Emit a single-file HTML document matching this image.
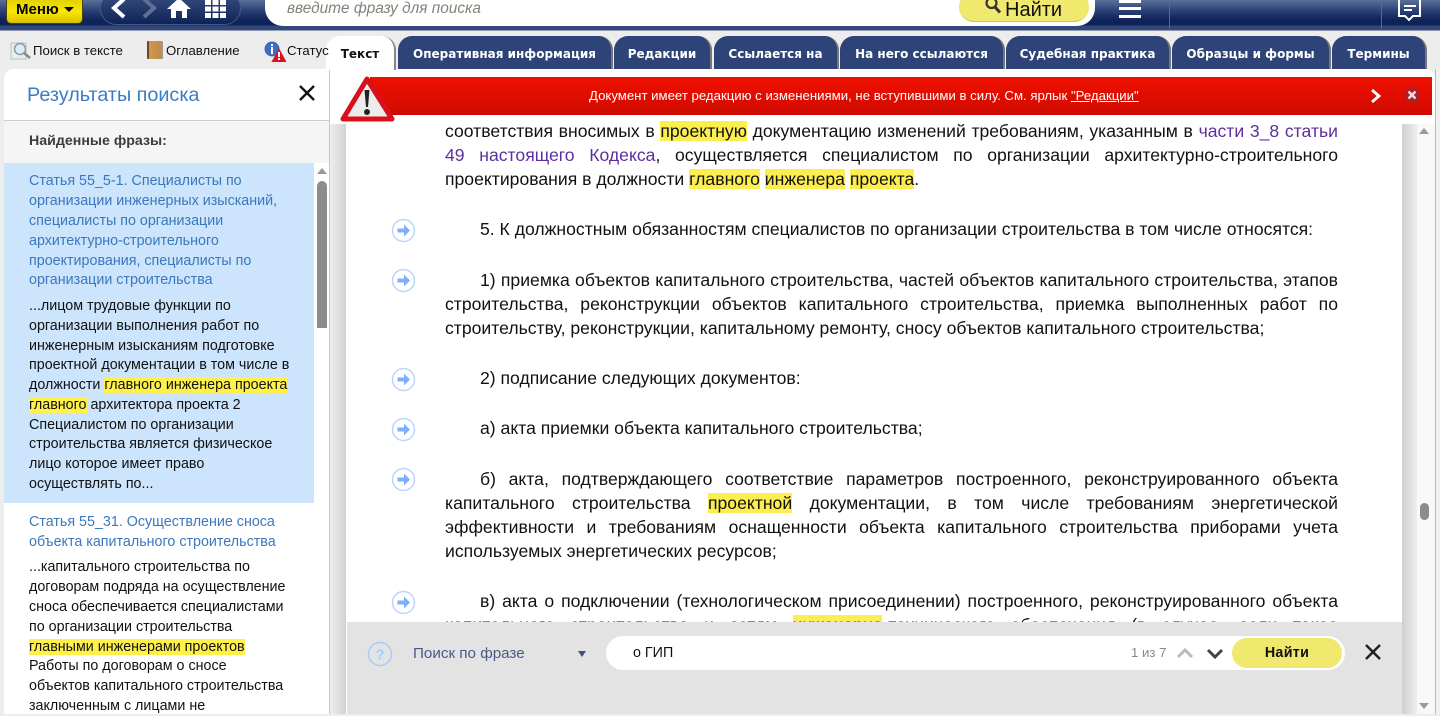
<!DOCTYPE html>
<html lang="ru"><head><meta charset="utf-8"><title>Документ</title>
<style>
html,body{margin:0;padding:0;width:1440px;height:714px;overflow:hidden;background:#ededed;font-family:"Liberation Sans",sans-serif;color:#000}
.a{position:absolute}
.tab{position:absolute;top:36px;height:33px;background:#2e4479;border-radius:14px 14px 0 0;border-right:2px solid #777;box-sizing:border-box;color:#fff;font:bold 12px/36px "DejaVu Sans",sans-serif;text-align:center;white-space:nowrap}
.l{position:absolute;left:445px;width:893px;font-size:17.6px;line-height:24px;height:24px;white-space:nowrap;text-align:justify;text-align-last:justify;color:#111}
.n{text-align-last:left}
.l b,.s b{font-weight:normal;background:#fdee4f}
.s{position:absolute;left:29px;margin-top:1px;font-size:14.3px;line-height:20px;height:20px;white-space:nowrap;color:#111}
.t{color:#3b78bd}
.p{color:#5d2f9c}
.s b{background:#fff14a}
.ic{position:absolute;left:391px}
</style></head><body>

<!-- top bar -->
<div class="a" style="left:0;top:0;width:1440px;height:31px;background:linear-gradient(#5a7099 0,#2d4478 10px,#0e2357 20px,#0e2357 25px,#33487a 26px,#33487a 30px,#ededed 31px)"></div>
<div class="a" style="left:6px;top:-6px;width:77px;height:30px;box-sizing:border-box;border:1px solid #4a4210;border-radius:5px;background:linear-gradient(#dcc800,#f7e800 60%,#d8c000);font:bold 15px/29px 'Liberation Sans',sans-serif;padding-left:9px">Меню<span style="display:inline-block;margin-left:5px;vertical-align:2px;border:5px solid transparent;border-top-color:#000;border-bottom:0"></span></div>
<div class="a" style="left:100px;top:-8px;width:141px;height:33px;box-sizing:border-box;border:1px solid #44598a;border-radius:17px;background:linear-gradient(#3a5080,#0e2357)"></div>
<svg class="a" style="left:100px;top:0" width="141" height="25">
<path d="M24 -1 L14 8 L24 17" fill="none" stroke="#fff" stroke-width="4"/>
<path d="M44 -1 L54 8 L44 17" fill="none" stroke="#5d6f94" stroke-width="4"/>
<path d="M67 9 L79 -2 L91 9 H87 V18 H82 V11 H76 V18 H71 V9 Z" fill="#fff"/>
<g fill="#fff"><rect x="105" y="0" width="6" height="5"/><rect x="112.500" y="0" width="6" height="5"/><rect x="120" y="0" width="6" height="5"/><rect x="105" y="6.500" width="6" height="5"/><rect x="112.500" y="6.500" width="6" height="5"/><rect x="120" y="6.500" width="6" height="5"/><rect x="105" y="13" width="6" height="5"/><rect x="112.500" y="13" width="6" height="5"/><rect x="120" y="13" width="6" height="5"/></g>
</svg>
<div class="a" style="left:265px;top:-10px;width:830px;height:36px;background:#fff;border-radius:0 0 18px 18px"></div>
<div class="a" style="left:287px;top:0;font:italic 15.400px/17px 'Liberation Sans',sans-serif;color:#85827a;white-space:nowrap">введите фразу для поиска</div>
<div class="a" style="left:959px;top:-8px;width:130px;height:30px;border-radius:15px;background:#f0e96e;border-bottom:1px solid #cfc65a;box-sizing:border-box"></div>
<div class="a" style="left:1005px;top:-2px;font-size:20px;line-height:24px;color:#111;white-space:nowrap">Найти</div>
<svg class="a" style="left:983px;top:0" width="20" height="16"><circle cx="8.500" cy="3" r="5" fill="none" stroke="#333" stroke-width="2.200"/><path d="M12 7 L17 12.500" stroke="#333" stroke-width="3"/></svg>
<div class="a" style="left:1119px;top:0;width:22px;height:3px;background:#fff"></div>
<div class="a" style="left:1119px;top:7px;width:22px;height:3px;background:#fff"></div>
<div class="a" style="left:1119px;top:15px;width:22px;height:3px;background:#fff"></div>
<div class="a" style="left:1169px;top:0;width:1px;height:29px;background:#56698f"></div>
<div class="a" style="left:1381px;top:0;width:1px;height:29px;background:#56698f"></div>
<svg class="a" style="left:1396px;top:0" width="28" height="24"><path d="M3 -2 V16 H9 L13 20 L17 16 H24 V-2" fill="none" stroke="#fff" stroke-width="2"/><path d="M8 6 H20 M8 10 H16" stroke="#fff" stroke-width="2"/></svg>

<!-- toolbar -->
<svg class="a" style="left:10px;top:41px" width="22" height="19"><rect x="1" y="2" width="15" height="16" fill="#e8eee8" stroke="#b8c4b8"/><circle cx="10" cy="8" r="5.500" fill="#dcebf5" stroke="#8a9aa5" stroke-width="1.500"/><path d="M14 12 L20 17" stroke="#8a8a80" stroke-width="2.500"/></svg>
<div class="a" style="left:33px;top:42px;font-size:13.200px;line-height:17px;white-space:nowrap;color:#111">Поиск в тексте</div>
<div class="a" style="left:147px;top:41px;width:14px;height:18px;background:linear-gradient(90deg,#6b4a22 0,#6b4a22 2px,#cf9a55 2px,#c08a48);border-right:2px solid #999;box-sizing:content-box;border-radius:1px"></div>
<div class="a" style="left:166px;top:42px;font-size:13.200px;line-height:17px;white-space:nowrap;color:#111">Оглавление</div>
<svg class="a" style="left:263px;top:41px" width="25" height="22"><circle cx="9" cy="8" r="7.500" fill="#3f6cc0"/><rect x="8" y="3" width="2" height="2" fill="#fff"/><rect x="8" y="6" width="2" height="7" fill="#fff"/><path d="M16 7 L23.500 21 H8.500 Z" fill="#e01020"/><rect x="15" y="11" width="2" height="5" fill="#fff"/><rect x="15" y="17" width="2" height="2" fill="#fff"/></svg>

<!-- left panel -->
<div class="a" style="left:4px;top:69px;width:326px;height:645px;background:#fff;border-radius:10px 0 0 0;overflow:hidden">
<div class="a" style="left:0;top:51px;width:326px;height:43px;background:#f5f5f5;border-top:1px solid #ccc;box-sizing:border-box"></div>
<div class="a" style="left:0;top:94px;width:310px;height:340px;background:#cce4fc"></div>
</div>
<div class="a" style="left:27px;top:83px;font-size:19.800px;line-height:25px;color:#3a7cc4;white-space:nowrap">Результаты поиска</div>
<svg class="a" style="left:298px;top:84px" width="18" height="18"><path d="M2 2 L16 16 M16 2 L2 16" stroke="#111" stroke-width="2.400"/></svg>
<div class="a" style="left:29px;top:132px;font:bold 14.200px/18px 'Liberation Sans',sans-serif;color:#3c3c3c;white-space:nowrap">Найденные фразы:</div>
<div class="s t" style="top:170px">Статья 55_5-1. Специалисты по</div>
<div class="s t" style="top:190px">организации инженерных изысканий,</div>
<div class="s t" style="top:210px">специалисты по организации</div>
<div class="s t" style="top:230px">архитектурно-строительного</div>
<div class="s t" style="top:250px">проектирования, специалисты по</div>
<div class="s t" style="top:269px">организации строительства</div>
<div class="s" style="top:295px">...лицом трудовые функции по</div>
<div class="s" style="top:315px">организации выполнения работ по</div>
<div class="s" style="top:335px">инженерным изысканиям подготовке</div>
<div class="s" style="top:354px">проектной документации в том числе в</div>
<div class="s" style="top:374px">должности <b>главного инженера проекта</b></div>
<div class="s" style="top:394px"><b>главного</b> архитектора проекта 2</div>
<div class="s" style="top:414px">Специалистом по организации</div>
<div class="s" style="top:433px">строительства является физическое</div>
<div class="s" style="top:453px">лицо которое имеет право</div>
<div class="s" style="top:473px">осуществлять по...</div>
<div class="s t" style="top:511px">Статья 55_31. Осуществление сноса</div>
<div class="s t" style="top:531px">объекта капитального строительства</div>
<div class="s" style="top:556px">...капитального строительства по</div>
<div class="s" style="top:576px">договорам подряда на осуществление</div>
<div class="s" style="top:596px">сноса обеспечивается специалистами</div>
<div class="s" style="top:616px">по организации строительства</div>
<div class="s" style="top:636px"><b>главными инженерами проектов</b></div>
<div class="s" style="top:655px">Работы по договорам о сносе</div>
<div class="s" style="top:675px">объектов капитального строительства</div>
<div class="s" style="top:695px">заключенным с лицами не</div>
<div class="a" style="left:317px;top:181px;width:10px;height:147px;background:#8c8c8c;border-radius:5px 5px 0 0"></div>
<div class="a" style="left:317px;top:168px;border:5px solid transparent;border-bottom:6px solid #999;border-top:0"></div>

<!-- doc frame -->
<div class="a" style="left:1435px;top:69px;width:5px;height:645px;background:#f0f0f0;border-left:1px solid #bbb;box-sizing:border-box"></div>
<div class="a" style="left:329px;top:69px;width:1px;height:645px;background:#c8c8c8"></div>
<div class="a" style="left:330px;top:69px;width:1105px;height:645px;background:#fff;border-radius:0 10px 0 0"></div>
<div class="a" style="left:330px;top:124px;width:16px;height:590px;background:linear-gradient(90deg,#eeeeee,#d2d2d2)"></div>
<div class="a" style="left:1402px;top:124px;width:15px;height:590px;background:linear-gradient(90deg,#cfcfcf,#eeeeee)"></div>
<div class="a" style="left:1417px;top:124px;width:18px;height:590px;background:#f8f8f8"></div>
<div class="a" style="left:1419px;top:128px;border:5px solid transparent;border-bottom:6px solid #999;border-top:0"></div>
<div class="a" style="left:1419px;top:703px;border:5px solid transparent;border-top:6px solid #999;border-bottom:0"></div>
<div class="a" style="left:1420px;top:503px;width:9px;height:17px;background:#8c8c8c;border-radius:5px"></div>

<!-- tabs -->
<div class="a" style="left:326px;top:36px;width:70px;height:34px;background:#fff;border-radius:14px 14px 0 0;font:bold 12px/36px 'DejaVu Sans',sans-serif;text-align:center;border-right:2px solid #888;box-sizing:border-box;color:#111">Текст</div>
<div class="tab" style="left:398px;width:215px">Оперативная информация</div>
<div class="tab" style="left:614px;width:98px">Редакции</div>
<div class="tab" style="left:714px;width:125px">Ссылается на</div>
<div class="tab" style="left:840px;width:165px">На него ссылаются</div>
<div class="tab" style="left:1006px;width:165px">Судебная практика</div>
<div class="tab" style="left:1172px;width:159px">Образцы и формы</div>
<div class="tab" style="left:1332px;width:95px">Термины</div>
<div class="a" style="left:287px;top:42px;font-size:13.200px;line-height:17px;white-space:nowrap;color:#111">Статус</div>

<!-- doc text -->
<div class="l" style="top:119px">соответствия вносимых в <b>проектную</b> документацию изменений требованиям, указанным в <span class="p">части 3_8 статьи</span></div>
<div class="l" style="top:143px"><span class="p">49 настоящего Кодекса</span>, осуществляется специалистом по организации архитектурно-строительного</div>
<div class="l n" style="top:167px">проектирования в должности <b>главного</b> <b>инженера</b> <b>проекта</b>.</div>
<div class="l n" style="top:217px;left:480px;width:858px">5. К должностным обязанностям специалистов по организации строительства в том числе относятся:</div>
<div class="l" style="top:268px;left:480px;width:858px">1) приемка объектов капитального строительства, частей объектов капитального строительства, этапов</div>
<div class="l" style="top:292px">строительства, реконструкции объектов капитального строительства, приемка выполненных работ по</div>
<div class="l n" style="top:316px">строительству, реконструкции, капитальному ремонту, сносу объектов капитального строительства;</div>
<div class="l n" style="top:366px;left:480px;width:858px">2) подписание следующих документов:</div>
<div class="l n" style="top:416px;left:480px;width:858px">а) акта приемки объекта капитального строительства;</div>
<div class="l" style="top:467px;left:480px;width:858px">б) акта, подтверждающего соответствие параметров построенного, реконструированного объекта</div>
<div class="l" style="top:491px">капитального строительства <b>проектной</b> документации, в том числе требованиям энергетической</div>
<div class="l" style="top:515px">эффективности и требованиям оснащенности объекта капитального строительства приборами учета</div>
<div class="l n" style="top:539px">используемых энергетических ресурсов;</div>
<div class="l" style="top:589px;left:480px;width:858px">в) акта о подключении (технологическом присоединении) построенного, реконструированного объекта</div>
<div class="l" style="top:613px">капитального строительства и сетям <b>инженерно</b>-технического обеспечения (в случае, если такое</div>

<!-- margin icons -->
<svg class="ic" style="top:218px" width="25" height="25"><use href="#i"/></svg>
<svg class="ic" style="top:268px" width="25" height="25"><use href="#i"/></svg>
<svg class="ic" style="top:367px" width="25" height="25"><use href="#i"/></svg>
<svg class="ic" style="top:417px" width="25" height="25"><use href="#i"/></svg>
<svg class="ic" style="top:467px" width="25" height="25"><use href="#i"/></svg>
<svg class="ic" style="top:590px" width="25" height="25"><use href="#i"/></svg>
<svg width="0" height="0" style="position:absolute"><defs><g id="i"><circle cx="12.500" cy="12.500" r="11" fill="#fff" stroke="#bcd6fb" stroke-width="1.500"/><path d="M6.500 10.500 H13 V6.500 L19 12.500 L13 18.500 V14.500 H6.500 Z" fill="#7fb0fa"/></g></defs></svg>

<!-- red notice -->
<div class="a" style="left:370px;top:77px;width:1062px;height:38px;background:linear-gradient(#f01000,#d00a00)"></div>
<div class="a" style="left:370px;top:88px;width:1000px;padding-left:219px;box-sizing:border-box;font-size:13.200px;line-height:16px;color:#fff;white-space:nowrap">Документ имеет редакцию с изменениями, не вступившими в силу. См. ярлык <u>"Редакции"</u></div>
<svg class="a" style="left:340px;top:75px" width="56" height="50"><path d="M27 4 L52 44 H3 Z" fill="#ececec" stroke="#d8101c" stroke-width="5" stroke-linejoin="round"/><path d="M24.500 15 H29.500 L28 32 H26 Z" fill="#222"/><circle cx="27" cy="37" r="3" fill="#222"/></svg>
<svg class="a" style="left:1369px;top:88px" width="14" height="16"><path d="M3 2 L10 8 L3 14" fill="none" stroke="#fff" stroke-width="2.800"/></svg>
<svg class="a" style="left:1404px;top:87px" width="16" height="16"><circle cx="8" cy="8" r="7.500" fill="#a8202c"/><path d="M4.500 4.500 L11.500 11.500 M11.500 4.500 L4.500 11.500" stroke="#f2dcdc" stroke-width="2.600"/></svg>

<!-- find bar -->
<div class="a" style="left:347px;top:622px;width:1055px;height:92px;background:#e3e3e3"></div>
<svg class="a" style="left:367px;top:641px" width="26" height="26"><circle cx="13" cy="13" r="11.500" fill="none" stroke="#a6cdf7" stroke-width="1.500"/><text x="13" y="18.500" text-anchor="middle" font-family="Liberation Sans" font-weight="bold" font-size="15" fill="#a6cdf7">?</text></svg>
<div class="a" style="left:413px;top:645px;font-size:15.200px;line-height:18px;color:#4a5a85;white-space:nowrap">Поиск по фразе</div>
<div class="a" style="left:578px;top:651px;border:4.500px solid transparent;border-top:6px solid #3f5082;border-bottom:0"></div>
<div class="a" style="left:606px;top:636px;width:739px;height:34px;background:#fff;border-radius:17px"></div>
<div class="a" style="left:633px;top:644px;font-size:14.300px;line-height:18px;color:#111;white-space:nowrap">о ГИП</div>
<div class="a" style="left:1131px;top:644px;font-size:13.200px;line-height:17px;color:#888;white-space:nowrap">1 из 7</div>
<svg class="a" style="left:1176px;top:646px" width="50" height="14"><path d="M2 11 L9 4 L16 11" fill="none" stroke="#bbb" stroke-width="3"/><path d="M32 4 L39 11 L46 4" fill="none" stroke="#444" stroke-width="3"/></svg>
<div class="a" style="left:1232px;top:638px;width:110px;height:30px;background:#f0e96e;border-radius:15px;text-align:center;font:bold 14.300px/30px 'Liberation Sans',sans-serif;color:#111;letter-spacing:.3px">Найти</div>
<svg class="a" style="left:1364px;top:643px" width="18" height="18"><path d="M2 2 L16 16 M16 2 L2 16" stroke="#222" stroke-width="2.500"/></svg>
</body></html>
